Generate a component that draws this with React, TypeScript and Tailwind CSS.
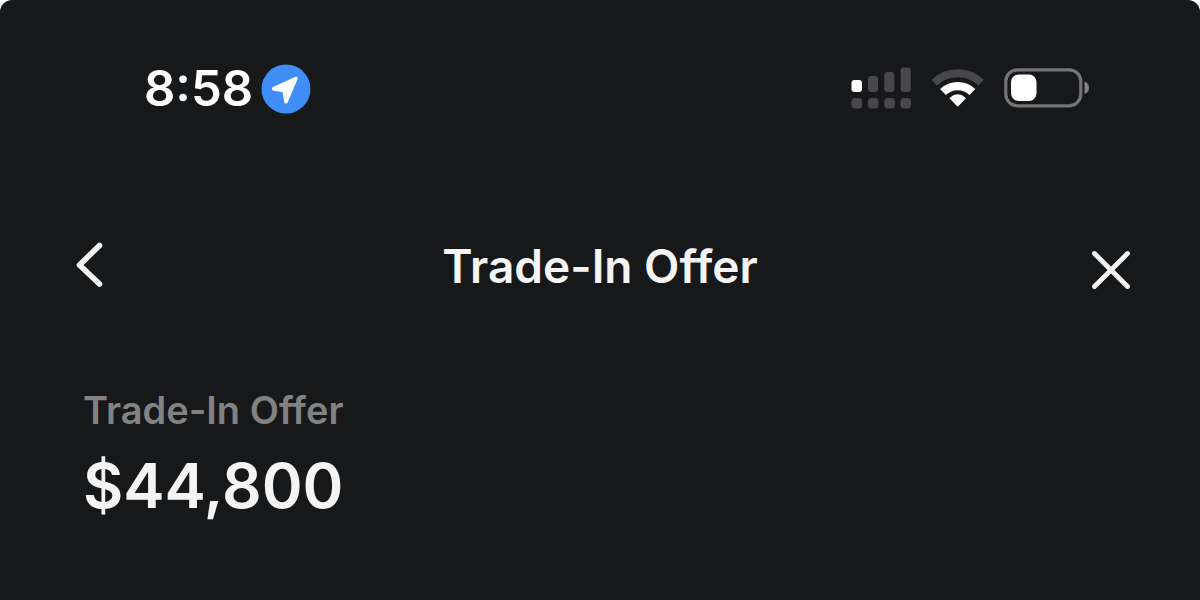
// Trade-in offer screen: status bar, header with back / close, offer amount.
function LocationBadge() {
  return (
    <svg width="50" height="50" viewBox="0 0 50 50" aria-hidden="true">
      <circle cx="25" cy="25" r="24.5" fill="#3f8df6" />
      <path
        d="M34.8 14.6 L12.8 24.8 L23.2 26.4 L25 37.6 Z"
        fill="#fff"
        stroke="#fff"
        strokeWidth="3.8"
        strokeLinejoin="round"
      />
    </svg>
  );
}

function SignalIcon() {
  return (
    <svg width="61" height="42" viewBox="0 0 61 42" fill="#48484a" aria-hidden="true">
      <rect x="0.5" y="13" width="10.5" height="12" rx="3" fill="#fff" />
      <rect x="17" y="9" width="10" height="16" rx="3" />
      <rect x="33.3" y="5" width="10" height="20" rx="3" />
      <rect x="49.7" y="0.5" width="10" height="24.5" rx="3" />
      <rect x="0.5" y="31" width="10.5" height="10.5" rx="3.5" />
      <rect x="17" y="31" width="10.5" height="10.5" rx="3.5" />
      <rect x="33.3" y="31" width="10.5" height="10.5" rx="3.5" />
      <rect x="49.5" y="31" width="10.5" height="10.5" rx="3.5" />
    </svg>
  );
}

function WifiIcon() {
  return (
    <svg width="54" height="42" viewBox="0 0 54 42" fill="none" aria-hidden="true">
      <path d="M3.3 15.6 A34 34 0 0 1 50.1 15.6" stroke="#48484a" strokeWidth="7.8" />
      <path d="M12 25 A21.3 21.3 0 0 1 41.4 25" stroke="#fff" strokeWidth="8.4" />
      <path
        d="M26.7 38.6 L19.4 31.2 Q26.7 25 34 31.2 Z"
        fill="#fff"
        stroke="#fff"
        strokeWidth="1.5"
        strokeLinejoin="round"
      />
    </svg>
  );
}

function BatteryIcon() {
  return (
    <svg width="86" height="42" viewBox="0 0 86 42" aria-hidden="true">
      <rect x="1.8" y="2.8" width="75" height="36" rx="11.5" fill="none" stroke="#747476" strokeWidth="3.2" />
      <rect x="7" y="7.5" width="25.5" height="26.5" rx="7.5" fill="#fff" />
      <path d="M80.5 14.5 C86.5 16 86.5 25.5 80.5 27 Z" fill="#838385" />
    </svg>
  );
}

export default function App() {
  return (
    <div className="min-h-screen bg-white font-['Inter',sans-serif]">
      <main className="min-h-screen rounded-t-xl bg-[#17181a] text-[#f4f4f5]">
        <div className="flex items-start justify-between pt-16 pr-[110px] pl-36">
          <div className="flex items-center gap-2">
            <span className="text-[49px] leading-[50px] font-semibold text-white">8:58</span>
            <LocationBadge />
          </div>
          <div className="flex items-center gap-[19px] pt-[3px]">
            <SignalIcon />
            <WifiIcon />
            <BatteryIcon />
          </div>
        </div>

        <header className="mt-[122px] flex items-center justify-between px-16">
          <button type="button" aria-label="Back" className="flex size-[60px] items-center">
            <svg width="50" height="60" viewBox="0 0 50 60" fill="none" aria-hidden="true">
              <path
                d="M35.5 9.5 L15.5 29 L35.5 48"
                stroke="#f4f4f5"
                strokeWidth="5.6"
                strokeLinecap="round"
                strokeLinejoin="round"
              />
            </svg>
          </button>
          <h1 className="text-[46px] leading-[60px] font-semibold">Trade-In Offer</h1>
          <button type="button" aria-label="Close" className="flex size-[60px] items-center justify-end">
            <svg width="50" height="60" viewBox="0 0 50 60" fill="none" aria-hidden="true">
              <path
                d="M8.5 17.5 L41.5 50.5 M41.5 17.5 L8.5 50.5"
                stroke="#f4f4f5"
                strokeWidth="4.8"
                strokeLinecap="round"
              />
            </svg>
          </button>
        </header>

        <section className="mt-[90px] px-[83px]">
          <h2 className="text-[38px] leading-[48px] font-semibold text-[#828283]">Trade-In Offer</h2>
          <p className="mt-3 text-[62px] leading-[80px] font-semibold">$44,800</p>
        </section>
      </main>
    </div>
  );
}
